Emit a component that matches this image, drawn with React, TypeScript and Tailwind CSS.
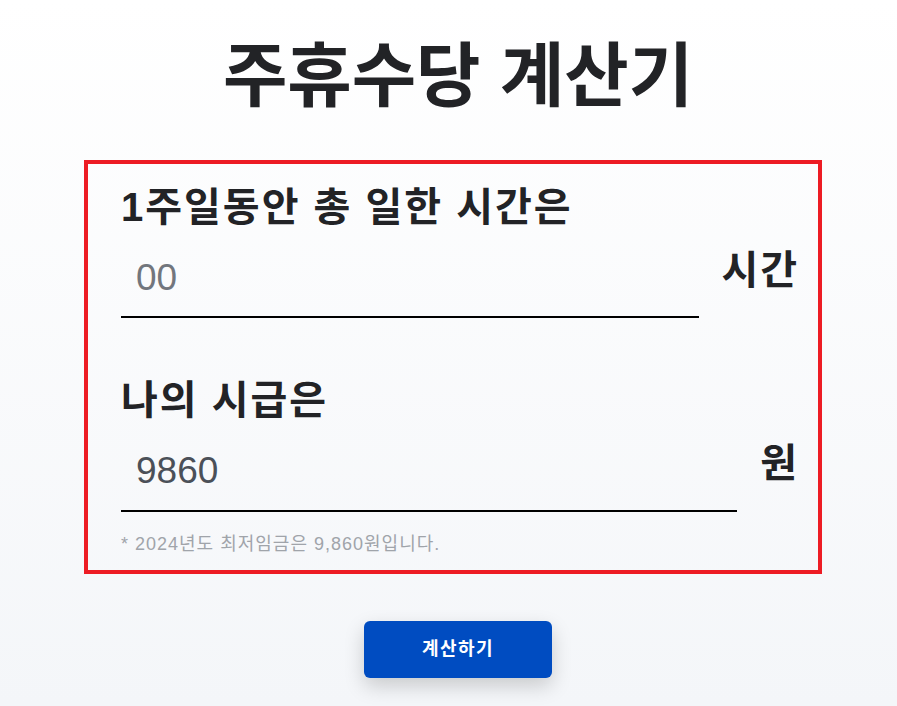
import React, { useState } from "react";

const FONT = { fontFamily: '"Liberation Sans", "Noto Sans CJK KR", sans-serif' };

export default function App() {
  const [hours, setHours] = useState("");
  const [wage, setWage] = useState("9860");

  return (
    <div
      className="min-h-[706px] w-full bg-gradient-to-b from-white to-[#f4f6f9] flex flex-col items-center pl-[9px]"
      style={FONT}
    >
      <h1 className="mt-[35px] ml-[10px] text-[70px] leading-[1.2] font-bold text-[#222326]">
        주휴수당 계산기
      </h1>

      <div className="mt-[41px] w-[738px] border-4 border-[#ed1c24] pl-[33px] pr-[19px] pt-[18px] pb-[15px]">
        <div className="text-[40px] font-bold leading-tight tracking-[2px] text-[#222326]">
          1주일동안 총 일한 시간은
        </div>
        <div className="flex items-start gap-[22px]">
          <input
            value={hours}
            onChange={(e) => setHours(e.target.value)}
            placeholder="00"
            className="flex-1 min-w-0 bg-transparent border-b-2 border-black px-[15px] pt-[23px] pb-[15px] text-[37px] leading-tight text-[#4b5058] placeholder:text-[#72767d] outline-none"
          />
          <span className="pt-[18px] text-[40px] leading-none font-bold tracking-[2px] text-[#222326]">
            시간
          </span>
        </div>

        <div className="mt-[57px] text-[40px] font-bold leading-tight tracking-[2px] text-[#222326]">
          나의 시급은
        </div>
        <div className="flex items-start gap-[23px]">
          <input
            value={wage}
            onChange={(e) => setWage(e.target.value)}
            placeholder="0"
            className="flex-1 min-w-0 bg-transparent border-b-2 border-black px-[15px] pt-[23px] pb-[15px] text-[37px] leading-tight text-[#4b5058] placeholder:text-[#72767d] outline-none"
          />
          <span className="pt-[18px] text-[40px] leading-none font-bold tracking-[2px] text-[#222326]">
            원
          </span>
        </div>
        <p className="mt-[21px] text-[18px] leading-tight tracking-[1px] text-[#a0a4aa]">
          * 2024년도 최저임금은 9,860원입니다.
        </p>
      </div>

      <button className="mt-[47px] ml-[10px] w-[188px] h-[57px] rounded-md bg-[#004cc1] text-white text-[18px] font-bold tracking-[1.5px] shadow-[0_8px_20px_rgba(0,0,0,0.18)]">
        계산하기
      </button>
    </div>
  );
}
